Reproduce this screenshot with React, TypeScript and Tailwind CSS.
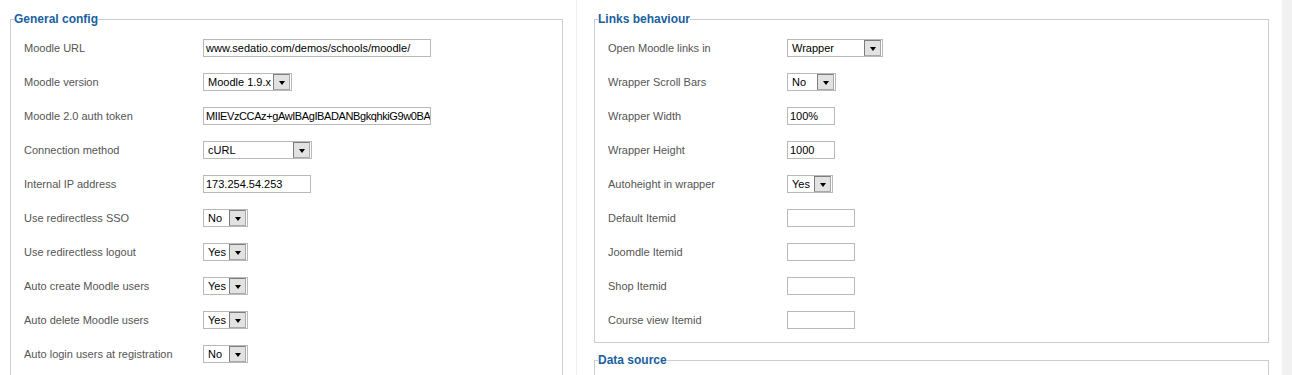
import React from 'react';

type Control =
  | { kind: 'text'; width: string; value?: string; tight?: boolean }
  | { kind: 'select'; width: string; value: string };

type Row = { label: string; control: Control };

const generalRows: Row[] = [
  { label: 'Moodle URL', control: { kind: 'text', width: 'w-[228px]', value: 'www.sedatio.com/demos/schools/moodle/' } },
  { label: 'Moodle version', control: { kind: 'select', width: 'w-[89px]', value: 'Moodle 1.9.x' } },
  { label: 'Moodle 2.0 auth token', control: { kind: 'text', width: 'w-[228px]', value: 'MIIEVzCCAz+gAwIBAgIBADANBgkqhkiG9w0BA', tight: true } },
  { label: 'Connection method', control: { kind: 'select', width: 'w-[109px]', value: 'cURL' } },
  { label: 'Internal IP address', control: { kind: 'text', width: 'w-[108px]', value: '173.254.54.253' } },
  { label: 'Use redirectless SSO', control: { kind: 'select', width: 'w-[45px]', value: 'No' } },
  { label: 'Use redirectless logout', control: { kind: 'select', width: 'w-[45px]', value: 'Yes' } },
  { label: 'Auto create Moodle users', control: { kind: 'select', width: 'w-[45px]', value: 'Yes' } },
  { label: 'Auto delete Moodle users', control: { kind: 'select', width: 'w-[45px]', value: 'Yes' } },
  { label: 'Auto login users at registration', control: { kind: 'select', width: 'w-[45px]', value: 'No' } },
];

const linksRows: Row[] = [
  { label: 'Open Moodle links in', control: { kind: 'select', width: 'w-[96px]', value: 'Wrapper' } },
  { label: 'Wrapper Scroll Bars', control: { kind: 'select', width: 'w-[49px]', value: 'No' } },
  { label: 'Wrapper Width', control: { kind: 'text', width: 'w-[48px]', value: '100%' } },
  { label: 'Wrapper Height', control: { kind: 'text', width: 'w-[48px]', value: '1000' } },
  { label: 'Autoheight in wrapper', control: { kind: 'select', width: 'w-[46px]', value: 'Yes' } },
  { label: 'Default Itemid', control: { kind: 'text', width: 'w-[68px]' } },
  { label: 'Joomdle Itemid', control: { kind: 'text', width: 'w-[68px]' } },
  { label: 'Shop Itemid', control: { kind: 'text', width: 'w-[68px]' } },
  { label: 'Course view Itemid', control: { kind: 'text', width: 'w-[68px]' } },
];

const FakeSelect: React.FC<{ width: string; value: string }> = ({ width, value }) => (
  <div className={`${width} h-[18px] border border-[#b9b9b9] bg-white flex items-center justify-between`}>
    <span className="pl-[4px] text-[11px] text-black leading-none whitespace-nowrap overflow-hidden">{value}</span>
    {/* dropdown button */}
    <span className="mr-px h-[16px] w-[17px] shrink-0 border-l border-t border-[#7d7d7d] border-r border-b border-r-[#a8a8a8] border-b-[#a8a8a8] bg-[#e2e2e2] flex items-end justify-center pb-[4px]">
      <span className="block w-0 h-0 border-l-[3.5px] border-r-[3.5px] border-t-[4px] border-l-transparent border-r-transparent border-t-black" />
    </span>
  </div>
);

const TextBox: React.FC<{ width: string; value?: string; tight?: boolean }> = ({ width, value, tight }) => (
  <div className={`${width} h-[18px] border border-[#b9b9b9] bg-white flex items-center overflow-hidden`}>
    <span className={`pl-[2px] text-[11px] text-black leading-none whitespace-nowrap ${tight ? 'tracking-[-0.4px]' : ''}`}>{value}</span>
  </div>
);

const FormRow: React.FC<Row> = ({ label, control }) => (
  <div className="h-[34px] flex items-center">
    <div className="w-[179px] shrink-0 text-[11px] text-[#555]">{label}</div>
    {control.kind === 'select' ? (
      <FakeSelect width={control.width} value={control.value} />
    ) : (
      <TextBox width={control.width} value={control.value} tight={control.tight} />
    )}
  </div>
);

const Fieldset: React.FC<{ title: string; className?: string; children?: React.ReactNode }> = ({ title, className = '', children }) => (
  <fieldset className={`border border-[#cccccc] m-0 p-0 ${className}`}>
    <legend className="ml-[3px] px-0 text-[12px] leading-[14px] font-bold text-[#1a5f9e]">{title}</legend>
    {children}
  </fieldset>
);

export default function App() {
  return (
    <div className="h-[375px] w-[1292px] overflow-hidden bg-white flex font-['Liberation_Sans',Arial,sans-serif]">
      {/* left column */}
      <div className="w-[577px] shrink-0 pl-[10px] pr-[14px] border-r border-[#efefef]">
        <Fieldset title="General config" className="mt-[12px] w-[553px]">
          <div className="pl-[13px] pt-[5px] pb-[20px]">
            {generalRows.map((r) => (
              <FormRow key={r.label} {...r} />
            ))}
          </div>
        </Fieldset>
      </div>

      {/* right column */}
      <div className="w-[705px] shrink-0 pl-[17px]">
        <Fieldset title="Links behaviour" className="mt-[12px] w-[675px]">
          <div className="pl-[13px] pt-[5px] pb-[5px]">
            {linksRows.map((r) => (
              <FormRow key={r.label} {...r} />
            ))}
          </div>
        </Fieldset>
        <Fieldset title="Data source" className="mt-[10px] w-[675px]">
          <div className="h-[60px]" />
        </Fieldset>
      </div>

      {/* scrollbar strip */}
      <div className="w-[10px] shrink-0 bg-[#f1f1f1]" />
    </div>
  );
}
